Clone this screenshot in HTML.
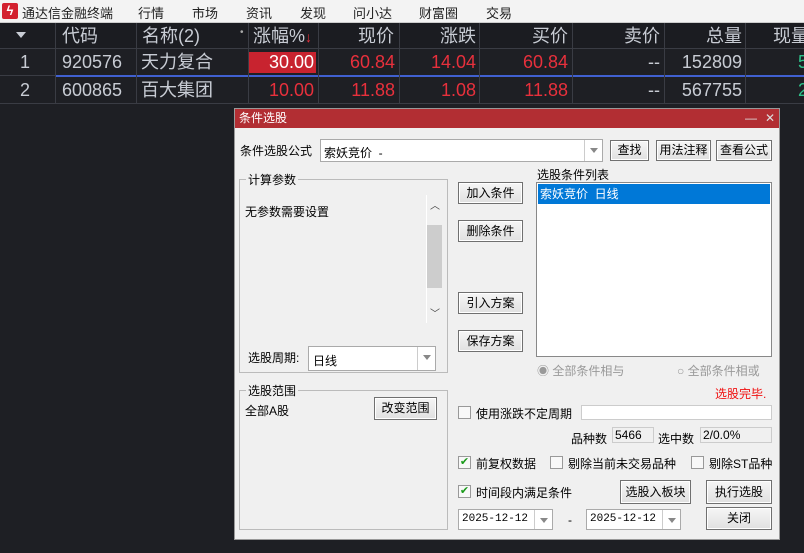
<!DOCTYPE html>
<html><head><meta charset="utf-8"><style>
*{margin:0;padding:0;box-sizing:border-box}
body{width:804px;height:553px;overflow:hidden;background:#1e1f24;font-family:"Liberation Sans","Noto Sans CJK SC",sans-serif;position:relative}
.a{position:absolute;white-space:nowrap}
.menu{left:0;top:0;width:804px;height:23px;background:#f3f3f3;border-bottom:1px solid #ccc;font-size:13px;color:#222}
.hd{top:23px;left:0;width:804px;height:26px;background:#1b1c21;border-bottom:1px solid #3a3c44}
.row{left:0;width:804px;height:27px;border-bottom:1px solid #3a3c44}
.t{font-size:18px;color:#c8ccd4;top:0;line-height:26px}
.r{color:#e8303c}
.vl{position:absolute;top:23px;height:80px;width:1px;background:#3a3c44}
.dlg{left:234px;top:108px;width:546px;height:432px;background:#f0f0f0;border:1px solid #999}
.f{font-size:12px;color:#000}
.btn{position:absolute;background:linear-gradient(#f6f6f6,#e0e0e0);border:1px solid #707070;box-shadow:inset 0 0 0 1px #fff;font-size:12px;text-align:center;color:#000}
.box{position:absolute;background:#fff;border:1px solid #aaa}
.grp{position:absolute;border:1px solid #bbb}
.cb{position:absolute;width:13px;height:13px;border:1px solid #999;background:#f8f8f8}
.dd{position:absolute;top:0;right:0;width:18px;height:100%;border-left:1px solid #ccc}
.dd:after{content:"";position:absolute;left:5px;top:8px;border:4px solid transparent;border-top:5px solid #888}
</style></head><body>
<div class="a menu">
 <div class="a" style="left:2px;top:3px;width:16px;height:16px;background:#d3202e;border-radius:2px;color:#fff;font-size:13px;line-height:16px;text-align:center;font-weight:bold">ϟ</div>
 <span class="a" style="left:22px;top:3px">通达信金融终端</span>
 <span class="a" style="left:138px;top:3px">行情</span>
 <span class="a" style="left:192px;top:3px">市场</span>
 <span class="a" style="left:246px;top:3px">资讯</span>
 <span class="a" style="left:300px;top:3px">发现</span>
 <span class="a" style="left:353px;top:3px">问小达</span>
 <span class="a" style="left:419px;top:3px">财富圈</span>
 <span class="a" style="left:486px;top:3px">交易</span>
</div>
<div class="a hd">
 <div class="a" style="left:16px;top:9px;border:5px solid transparent;border-top:6px solid #c8ccd4"></div>
 <span class="a t" style="left:62px">代码</span>
 <span class="a t" style="left:142px">名称(2)</span>
 <span class="a" style="left:240px;top:4px;color:#aaa;font-size:10px">•</span>
 <span class="a t" style="left:253px">涨幅%<span style="color:#e8303c;font-size:14px">↓</span></span>
 <span class="a t" style="right:410px">现价</span>
 <span class="a t" style="right:328px">涨跌</span>
 <span class="a t" style="right:236px">买价</span>
 <span class="a t" style="right:144px">卖价</span>
 <span class="a t" style="right:62px">总量</span>
 <span class="a t" style="left:773px">现量</span>
</div>
<div class="a row" style="top:49px">
 <span class="a t" style="left:20px">1</span>
 <span class="a t" style="left:62px">920576</span>
 <span class="a t" style="left:141px">天力复合</span>
 <div class="a" style="left:249px;top:3px;width:67px;height:21px;background:#c8232f"></div>
 <span class="a t" style="right:490px;color:#fff">30.00</span>
 <span class="a t r" style="right:409px">60.84</span>
 <span class="a t r" style="right:328px">14.04</span>
 <span class="a t r" style="right:236px">60.84</span>
 <span class="a t" style="right:144px">--</span>
 <span class="a t" style="right:62px">152809</span>
 <span class="a t" style="left:798px;color:#2ec28a">5</span>
</div>
<div class="a" style="left:56px;top:75px;width:748px;height:2px;background:#4060d0"></div>
<div class="a row" style="top:77px">
 <span class="a t" style="left:20px">2</span>
 <span class="a t" style="left:62px">600865</span>
 <span class="a t" style="left:141px">百大集团</span>
 <span class="a t r" style="right:490px">10.00</span>
 <span class="a t r" style="right:409px">11.88</span>
 <span class="a t r" style="right:328px">1.08</span>
 <span class="a t r" style="right:236px">11.88</span>
 <span class="a t" style="right:144px">--</span>
 <span class="a t" style="right:62px">567755</span>
 <span class="a t" style="left:798px;color:#2ec28a">2</span>
</div>
<div class="vl" style="left:55px"></div><div class="vl" style="left:136px"></div><div class="vl" style="left:248px"></div><div class="vl" style="left:318px"></div><div class="vl" style="left:399px"></div><div class="vl" style="left:479px"></div><div class="vl" style="left:572px"></div><div class="vl" style="left:664px"></div><div class="vl" style="left:745px"></div>

<div class="a dlg">
 <div class="a" style="left:0;top:0;width:544px;height:19px;background:#b22e33;color:#fff;font-size:12px;line-height:19px;padding-left:4px">条件选股
  <span class="a" style="left:510px;top:0;color:#ddd">—</span><span class="a" style="left:530px;top:0;color:#ddd">✕</span></div>
 <span class="a f" style="left:5px;top:33px">条件选股公式</span>
 <div class="box" style="left:85px;top:30px;width:283px;height:23px"><span class="a f" style="left:3px;top:4px">索妖竞价 &nbsp;-</span><div class="dd"></div></div>
 <div class="btn" style="left:375px;top:31px;width:39px;height:21px;line-height:19px">查找</div>
 <div class="btn" style="left:421px;top:31px;width:55px;height:21px;line-height:19px">用法注释</div>
 <div class="btn" style="left:481px;top:31px;width:56px;height:21px;line-height:19px">查看公式</div>

 <div class="grp" style="left:4px;top:70px;width:209px;height:194px"></div>
 <span class="a f" style="left:11px;top:62px;background:#f0f0f0;padding:0 2px">计算参数</span>
 <span class="a f" style="left:10px;top:94px">无参数需要设置</span>
 <div class="a" style="left:191px;top:86px;width:1px;height:128px;background:#fff"></div>
 <div class="a" style="left:192px;top:116px;width:15px;height:63px;background:#cdcdcd"></div>
 <span class="a" style="left:195px;top:88px;font-size:10px;color:#444">︿</span>
 <span class="a" style="left:195px;top:196px;font-size:10px;color:#444">﹀</span>
 <span class="a f" style="left:13px;top:240px">选股周期:</span>
 <div class="box" style="left:73px;top:237px;width:128px;height:25px"><span class="a f" style="left:4px;top:5px">日线</span><div class="dd"></div></div>

 <div class="btn" style="left:223px;top:73px;width:65px;height:22px;line-height:20px">加入条件</div>
 <div class="btn" style="left:223px;top:111px;width:65px;height:22px;line-height:20px">删除条件</div>
 <div class="btn" style="left:223px;top:183px;width:65px;height:22px;line-height:20px">引入方案</div>
 <div class="btn" style="left:223px;top:221px;width:65px;height:22px;line-height:20px">保存方案</div>

 <span class="a f" style="left:302px;top:57px">选股条件列表</span>
 <div class="box" style="left:301px;top:73px;width:236px;height:175px;border-color:#888">
  <div class="a" style="left:1px;top:1px;width:232px;height:20px;background:#0078d7;color:#fff;font-size:12px;line-height:20px;padding-left:2px">索妖竞价 &nbsp;日线</div></div>
 <span class="a" style="left:302px;top:253px;font-size:12px;color:#999">◉ 全部条件相与</span>
 <span class="a" style="left:442px;top:253px;font-size:12px;color:#999">○ 全部条件相或</span>

 <div class="grp" style="left:4px;top:281px;width:209px;height:140px"></div>
 <span class="a f" style="left:11px;top:273px;background:#f0f0f0;padding:0 2px">选股范围</span>
 <span class="a f" style="left:10px;top:293px">全部A股</span>
 <div class="btn" style="left:139px;top:288px;width:63px;height:23px;line-height:21px">改变范围</div>

 <span class="a" style="left:480px;top:276px;font-size:12px;color:#f01010">选股完毕.</span>
 <div class="cb" style="left:223px;top:297px"></div>
 <span class="a f" style="left:241px;top:296px">使用涨跌不定周期</span>
 <div class="box" style="left:346px;top:296px;width:191px;height:15px;border-color:#ccc"></div>
 <span class="a f" style="left:336px;top:321px">品种数</span>
 <div class="a" style="left:377px;top:318px;width:42px;height:16px;border:1px solid #ccc;font-size:12px;padding-left:2px">5466</div>
 <span class="a f" style="left:423px;top:321px">选中数</span>
 <div class="a" style="left:465px;top:318px;width:72px;height:16px;border:1px solid #ccc;font-size:12px;padding-left:2px">2/0.0%</div>

 <div class="cb" style="left:223px;top:347px;color:#1a9a1a;font-size:11px;line-height:11px;text-align:center">✔</div>
 <span class="a f" style="left:241px;top:346px">前复权数据</span>
 <div class="cb" style="left:315px;top:347px"></div>
 <span class="a f" style="left:333px;top:346px">剔除当前未交易品种</span>
 <div class="cb" style="left:456px;top:347px"></div>
 <span class="a f" style="left:474px;top:346px">剔除ST品种</span>

 <div class="cb" style="left:223px;top:376px;color:#1a9a1a;font-size:11px;line-height:11px;text-align:center">✔</div>
 <span class="a f" style="left:241px;top:375px">时间段内满足条件</span>
 <div class="btn" style="left:385px;top:371px;width:71px;height:24px;line-height:22px">选股入板块</div>
 <div class="btn" style="left:471px;top:371px;width:66px;height:24px;line-height:22px">执行选股</div>
 <div class="btn" style="left:471px;top:398px;width:66px;height:23px;line-height:21px">关闭</div>
 <div class="box" style="left:223px;top:400px;width:95px;height:21px"><span class="a" style="left:3px;top:3px;font-size:11px;font-family:'Liberation Mono',monospace">2025-12-12</span><div class="dd"></div></div>
 <span class="a f" style="left:333px;top:404px">-</span>
 <div class="box" style="left:351px;top:400px;width:95px;height:21px"><span class="a" style="left:3px;top:3px;font-size:11px;font-family:'Liberation Mono',monospace">2025-12-12</span><div class="dd"></div></div>
</div>
</body></html>
